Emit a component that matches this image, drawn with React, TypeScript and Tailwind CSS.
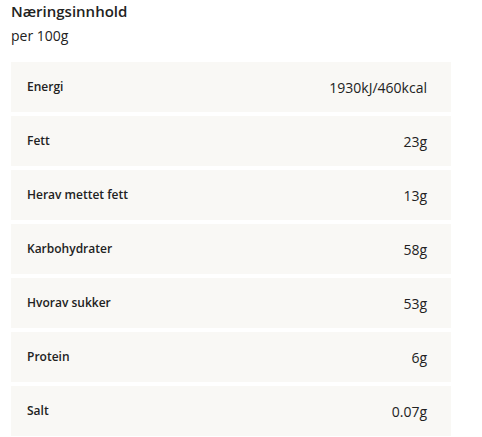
import React from "react";

const rows: [string, string][] = [
  ["Energi", "1930kJ/460kcal"],
  ["Fett", "23g"],
  ["Herav mettet fett", "13g"],
  ["Karbohydrater", "58g"],
  ["Hvorav sukker", "53g"],
  ["Protein", "6g"],
  ["Salt", "0.07g"],
];

export default function App() {
  return (
    <div className="w-[482px] h-[437px] bg-white overflow-hidden text-[#222222]" style={{ fontFamily: '"Open Sans", sans-serif' }}>
      <div className="pl-[11px] w-[451px]">
        <h2 className="text-[15px] font-semibold leading-[20px] pt-[1px]">Næringsinnhold</h2>
        <p className="text-[14px] leading-[20px] mt-[5px]">per 100g</p>
        <div className="mt-[16px] flex flex-col gap-[4px]">
          {rows.map(([k, v]) => (
            <div key={k} className="h-[50px] bg-[#f9f8f5] flex items-center justify-between pl-[16px] pr-[24px]">
              <span className="text-[12px] font-semibold">{k}</span>
              <span className="text-[14px]">{v}</span>
            </div>
          ))}
        </div>
      </div>
    </div>
  );
}
